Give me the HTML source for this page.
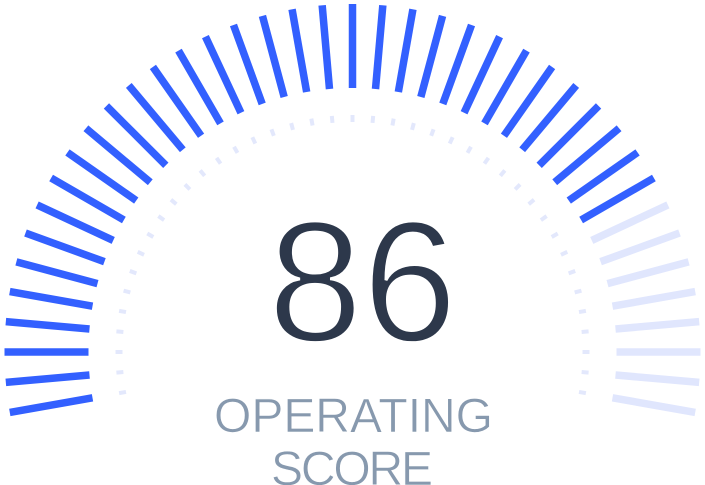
<!DOCTYPE html>
<html><head><meta charset="utf-8"><style>
html,body{margin:0;padding:0;background:#fff;width:705px;height:485px;overflow:hidden}
svg{display:block}
</style></head><body>
<svg id="g" width="705" height="485" viewBox="0 0 705 485">
<text x="268" y="341" textLength="189" lengthAdjust="spacingAndGlyphs" font-family="Liberation Sans, sans-serif" font-size="172" fill="#2d384b" stroke="#fff" stroke-width="3">86</text>
<text x="214" y="432" textLength="279" lengthAdjust="spacing" font-family="Liberation Sans, sans-serif" font-size="48" fill="#8799ae" stroke="#fff" stroke-width="0.6">OPERATING</text>
<text x="271" y="485" textLength="162" lengthAdjust="spacing" font-family="Liberation Sans, sans-serif" font-size="48" fill="#8799ae" stroke="#fff" stroke-width="0.6">SCORE</text>
</svg>
<script>
var s=document.getElementById('g'),cx=352.5,cy=352,ns='http://www.w3.org/2000/svg';
function ln(a,r1,r2,w,c){var t=a*Math.PI/180,l=document.createElementNS(ns,'line');
l.setAttribute('x1',cx+r1*Math.cos(t));l.setAttribute('y1',cy-r1*Math.sin(t));
l.setAttribute('x2',cx+r2*Math.cos(t));l.setAttribute('y2',cy-r2*Math.sin(t));
l.setAttribute('stroke',c);l.setAttribute('stroke-width',w);s.appendChild(l);}
for(var a=-10;a<=190;a+=5){
 ln(a,264,348,7.5,a>=30?'#3360ff':'#e0e6fd');
 ln(a,230,237,4,'#e3e8fc');
}
</script>
</body></html>
